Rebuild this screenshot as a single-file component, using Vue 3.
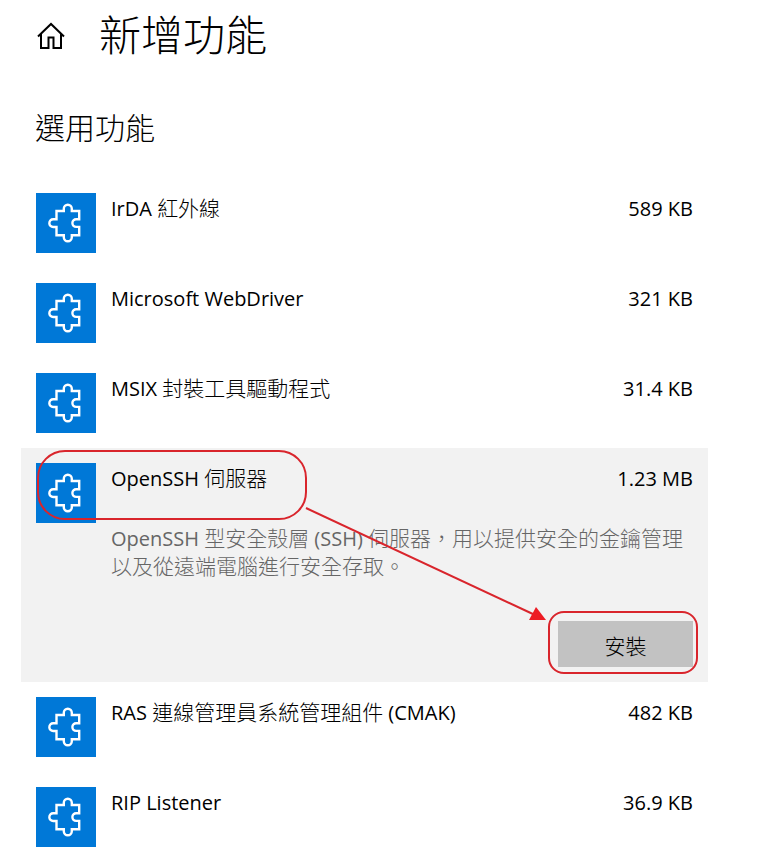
<script setup>
import { ref } from 'vue'

const features = [
  { id: 'irda', name: 'IrDA 紅外線', size: '589 KB' },
  { id: 'webdriver', name: 'Microsoft WebDriver', size: '321 KB' },
  { id: 'msix', name: 'MSIX 封裝工具驅動程式', size: '31.4 KB' },
  {
    id: 'openssh',
    name: 'OpenSSH 伺服器',
    size: '1.23 MB',
    description: 'OpenSSH 型安全殼層 (SSH) 伺服器，用以提供安全的金鑰管理以及從遠端電腦進行安全存取。'
  },
  { id: 'cmak', name: 'RAS 連線管理員系統管理組件 (CMAK)', size: '482 KB' },
  { id: 'rip', name: 'RIP Listener', size: '36.9 KB' }
]

const selected = ref('openssh')

const select = (feature) => {
  if (feature.description) {
    selected.value = feature.id
  }
}

// Splits mixed text so that Chinese runs can have their own size and weight
const toRuns = (text) => {
  return text.match(/[\u3000-\uffef]+|[^\u3000-\uffef]+/g).map((part) => ({
    text: part,
    han: /[\u3000-\uffef]/.test(part)
  }))
}
</script>

<template>
  <main class="page" lang="zh-Hant">
    <header class="page-header">
      <a href="#" class="home" aria-label="首頁">
        <svg viewBox="0 0 28 28" width="28" height="28">
          <path d="M1 14.5 14 2 27 14.5M4 12V26H11.5V15.5H16.5V26H24V12" />
        </svg>
      </a>
      <h1>新增功能</h1>
    </header>

    <h2>選用功能</h2>

    <ul class="feature-list">
      <li
        v-for="feature in features"
        :key="feature.id"
        class="feature"
        :class="{ selected: feature.id === selected }"
        @click="select(feature)"
      >
        <div class="feature-row">
          <svg class="feature-icon" viewBox="0 0 60 60" width="60" height="60">
            <path
              d="M20.5 18H27.8V15.8A4 4 0 0 1 35.8 15.8V18H43.2V26.3H40.2A3.8 3.8 0 0 0 40.2 33.9H43.2V42.3H35.8V44.2A4 4 0 0 1 27.8 44.2V42.3H20.5V34H17.2A3.8 3.8 0 0 1 17.2 26.3H20.5Z"
            />
          </svg>
          <span class="feature-name"><span v-for="(run, i) in toRuns(feature.name)" :key="i" :class="{ han: run.han }">{{ run.text }}</span></span>
          <span class="feature-size">{{ feature.size }}</span>
        </div>

        <template v-if="feature.id === selected">
          <p class="description"><span v-for="(run, i) in toRuns(feature.description)" :key="i" :class="{ han: run.han }">{{ run.text }}</span></p>
          <div class="actions">
            <button type="button" class="install">安裝</button>
          </div>

          <!-- Callouts -->
          <span class="callout callout-name"></span>
          <span class="callout callout-install"></span>
          <svg class="callout-arrow" viewBox="0 0 242 116" width="242" height="116">
            <path class="arrow-line" d="M1 2 230 109" />
            <path class="arrow-head" d="M231 101 241 114H224Z" />
          </svg>
        </template>
      </li>
    </ul>
  </main>
</template>

<style>
body {
  margin: 0;
  background: #fff;
}
</style>

<style scoped>
.page {
  padding: 5px 68px 4px 21px;
  color: #000;
  font-family: "Open Sans", "Noto Sans CJK TC", sans-serif;
  font-size: 20px;
  line-height: 28px;
}

.page-header {
  display: flex;
  align-items: center;
  gap: 34px;
  padding-left: 16px;
}

.home {
  display: flex;
  padding-top: 6px;
}

.home path {
  fill: none;
  stroke: #000;
  stroke-width: 2;
}

h1,
h2 {
  margin: 0;
  font-family: "Noto Sans CJK TC", sans-serif;
  font-weight: 300;
}

h1 {
  font-size: 42px;
  line-height: 56px;
}

h2 {
  margin: 45px 0 32px;
  padding-left: 14px;
  font-size: 30px;
  line-height: 40px;
}

.han {
  font-size: 21px;
  font-weight: 300;
  line-height: 1;
}

.feature-list {
  margin: 0;
  padding: 0;
  list-style: none;
}

.feature {
  position: relative;
  padding: 15px;
}

.feature.selected {
  background: #f2f2f2;
}

.feature-row {
  display: flex;
  align-items: flex-start;
  gap: 15px;
}

.feature-icon {
  flex: none;
  background: #0078d7;
}

.feature-icon path {
  fill: none;
  stroke: #fff;
  stroke-width: 2.4;
}

.feature-name {
  flex: 1;
  line-height: 32px;
}

.feature-size {
  line-height: 32px;
}

.description {
  margin: 2px 0 40px;
  padding-left: 75px;
  color: #666;
}

.actions {
  display: flex;
  justify-content: flex-end;
}

.install {
  width: 135px;
  height: 46px;
  padding: 2px 0 0;
  border: none;
  background: #c2c2c2;
  color: #000;
  font-family: inherit;
  font-size: 21px;
  font-weight: 300;
  cursor: pointer;
}

.install:hover {
  background: #b4b4b4;
}

.callout {
  position: absolute;
  box-sizing: border-box;
  border: 2px solid #d9252c;
  pointer-events: none;
}

.callout-name {
  top: 2px;
  left: 16px;
  width: 270px;
  height: 70px;
  border-radius: 28px;
}

.callout-install {
  right: 10px;
  bottom: 8px;
  width: 150px;
  height: 63px;
  border-radius: 16px;
}

.callout-arrow {
  position: absolute;
  top: 58px;
  left: 284px;
  pointer-events: none;
}

.arrow-line {
  fill: none;
  stroke: #d9252c;
  stroke-width: 2;
}

.arrow-head {
  fill: #ed1c24;
}
</style>
